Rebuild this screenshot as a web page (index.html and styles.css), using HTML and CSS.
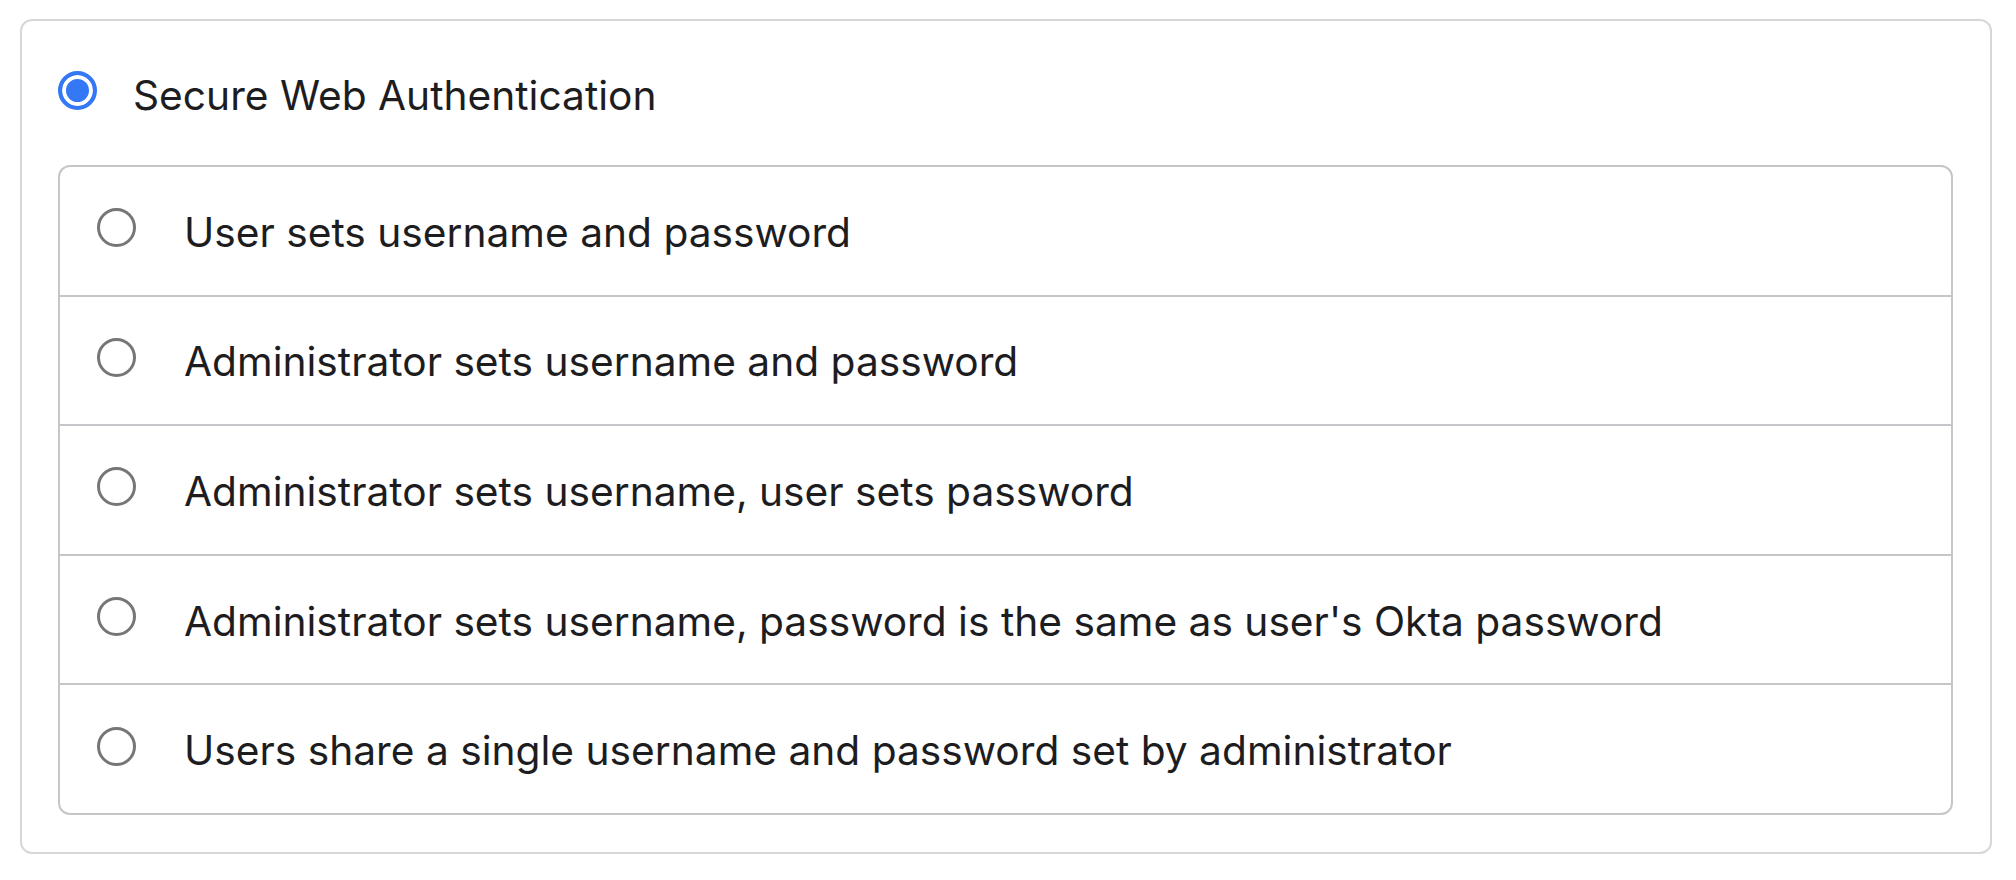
FILE: index.html
```html
<!DOCTYPE html>
<html>
<head>
<meta charset="utf-8">
<link rel="stylesheet" href="styles.css">
</head>
<body>
<div class="card">
  <label class="head">
    <span class="radio radio-on"></span>
    <span class="head-label">Secure Web Authentication</span>
  </label>
  <div class="options">
    <label class="option"><span class="radio"></span><span class="opt-label">User sets username and password</span></label>
    <label class="option"><span class="radio"></span><span class="opt-label">Administrator sets username and password</span></label>
    <label class="option"><span class="radio"></span><span class="opt-label">Administrator sets username, user sets password</span></label>
    <label class="option"><span class="radio"></span><span class="opt-label">Administrator sets username, password is the same as user's Okta password</span></label>
    <label class="option"><span class="radio"></span><span class="opt-label">Users share a single username and password set by administrator</span></label>
  </div>
</div>
</body>
</html>
```
FILE: styles.css
```css
* { box-sizing: border-box; }
html, body { margin: 0; padding: 0; background: #fff; }
body {
  font-family: Inter, "Liberation Sans", sans-serif;
  color: #1d1d1f;
  padding: 19px 24px 0 20px;
}
.card {
  width: 1972px;
  height: 835px;
  border: 2px solid #d7d7db;
  border-radius: 12px;
  padding: 0 37px 0 36px;
}
.head {
  display: flex;
  align-items: center;
  height: 144px;
  padding-bottom: 6px;
}
.head-label {
  font-size: 40.7px;
  margin-left: 36px;
  margin-top: 10px;
}
.radio {
  flex: none;
  width: 39px;
  height: 39px;
  border-radius: 50%;
  border: 3px solid #767676;
  background: #fff;
}
.radio-on {
  border: 4px solid #3478f6;
  box-shadow: inset 0 0 0 4px #fff;
  background: #3478f6;
}
.options {
  border: 2px solid #c6c6ca;
  border-radius: 12px;
  height: 650px;
  display: flex;
  flex-direction: column;
}
.option {
  flex: 1;
  display: flex;
  align-items: center;
  padding-left: 37px;
  padding-bottom: 6px;
  border-top: 2px solid #c6c6ca;
}
.option:first-child { border-top: none; }
.opt-label {
  font-size: 40.7px;
  margin-left: 48px;
  margin-top: 9px;
}
```
